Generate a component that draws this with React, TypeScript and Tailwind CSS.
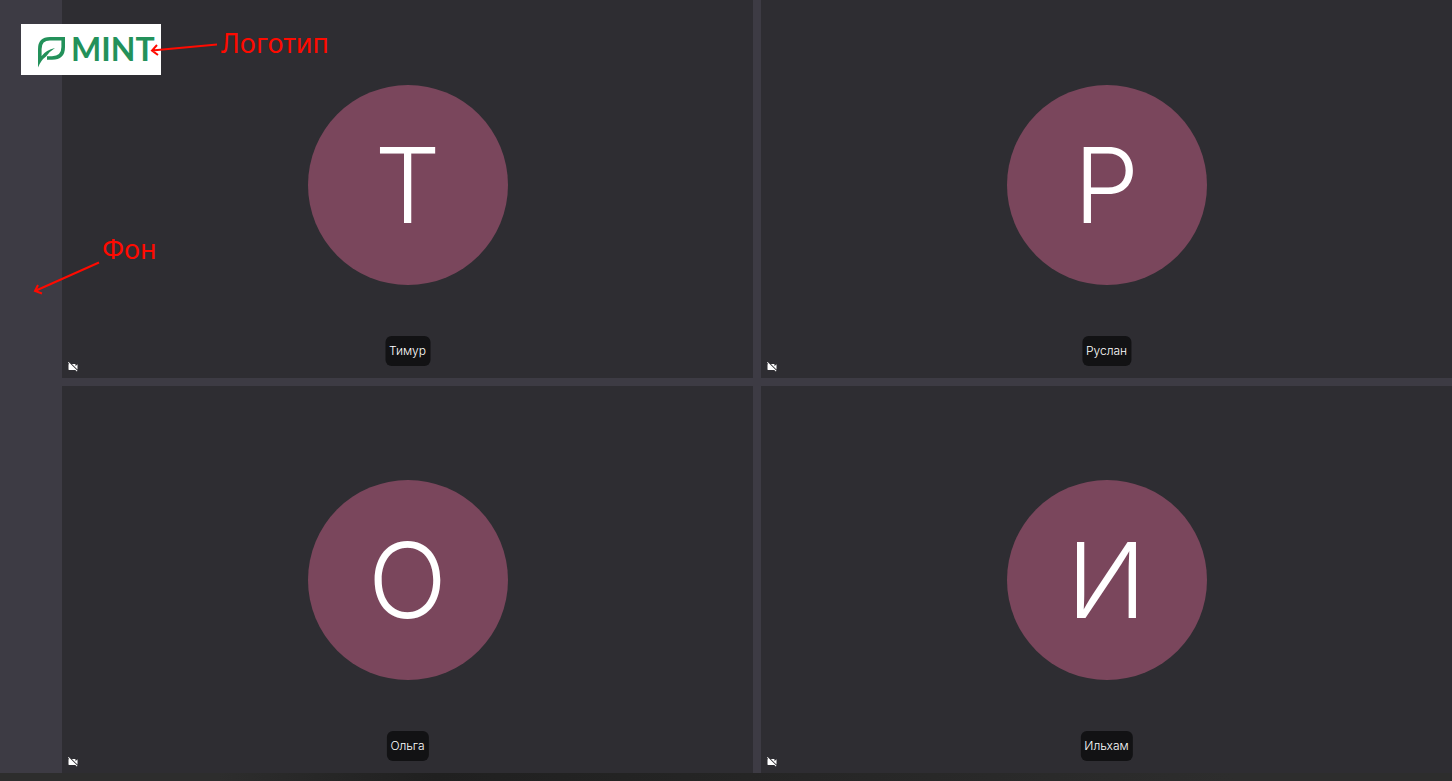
import { MdVideocamOff } from 'react-icons/md';

interface Participant {
  id: string;
  name: string;
}

const participants: Participant[] = [
  { id: 'timur', name: 'Тимур' },
  { id: 'ruslan', name: 'Руслан' },
  { id: 'olga', name: 'Ольга' },
  { id: 'ilham', name: 'Ильхам' },
];

function ParticipantTile({ participant }: { participant: Participant }) {
  return (
    <article
      aria-label={participant.name}
      className="relative flex items-center justify-center bg-[#2e2d32]"
    >
      <div
        aria-hidden="true"
        className="flex size-[200px] items-center justify-center rounded-full bg-[#7a465c] text-[104px] leading-none font-light text-white"
      >
        {participant.name.charAt(0)}
      </div>
      <span className="absolute bottom-3 left-1/2 -translate-x-1/2 rounded-md bg-[#121214] px-1 text-xs leading-[30px] font-light text-white">
        {participant.name}
      </span>
      <MdVideocamOff
        aria-label="Camera off"
        className="absolute bottom-[5px] left-[5px] size-3 text-white"
      />
    </article>
  );
}

function Logo() {
  return (
    <div className="absolute top-6 left-[21px] flex h-[51px] w-[140px] items-start bg-white pt-2 pl-4 text-[#23915a]">
      <svg viewBox="0 0 30 36" className="h-9 w-[30px]" aria-hidden="true">
        <path
          d="M2.8 28V17Q2.8 6.8 13 6.8H26.2V15Q26.2 26 15 26H10"
          fill="none"
          stroke="currentColor"
          strokeWidth="3.6"
        />
        <path d="M1 35.500V24H4.600Q9 18 18 16Q13 19 9 24.500Q4 28 1 35.500Z" fill="currentColor" />
      </svg>
      <span className="ml-1 font-['Lato'] text-[32px] leading-[34px] font-bold">MINT</span>
    </div>
  );
}

/* Red callouts drawn over the call grid */
function Callouts() {
  return (
    <div className="pointer-events-none absolute inset-0 font-['Noto_Sans',sans-serif] text-[27px] leading-8 text-[#ff0a00]">
      <svg
        className="absolute top-0 left-0 h-[300px] w-[230px]"
        viewBox="0 0 230 300"
        fill="none"
        stroke="currentColor"
        strokeWidth="2"
        aria-hidden="true"
      >
        <path d="M217 44.500L152 50.500M157 45L152 50.500L158 55" />
        <path d="M99 262.500L35 291M38 285L35 291L42 293.500" />
      </svg>
      <span className="absolute top-[27px] left-[221px]">Логотип</span>
      <span className="absolute top-[233px] left-[102px]">Фон</span>
    </div>
  );
}

export default function App() {
  return (
    <div className="relative flex h-screen flex-col overflow-hidden bg-[#3d3b44] font-['Inter',sans-serif]">
      <div className="flex min-h-0 flex-1">
        <aside className="w-[62px] shrink-0" />
        <main className="-mt-[9px] grid flex-1 grid-cols-2 grid-rows-2 gap-2">
          {participants.map((participant) => (
            <ParticipantTile key={participant.id} participant={participant} />
          ))}
        </main>
      </div>
      <footer className="h-2 shrink-0 bg-linear-to-r from-[#2d2d2d] from-15% via-[#202020] via-30% to-[#2d2d2d] to-85%" />
      <Logo />
      <Callouts />
    </div>
  );
}
